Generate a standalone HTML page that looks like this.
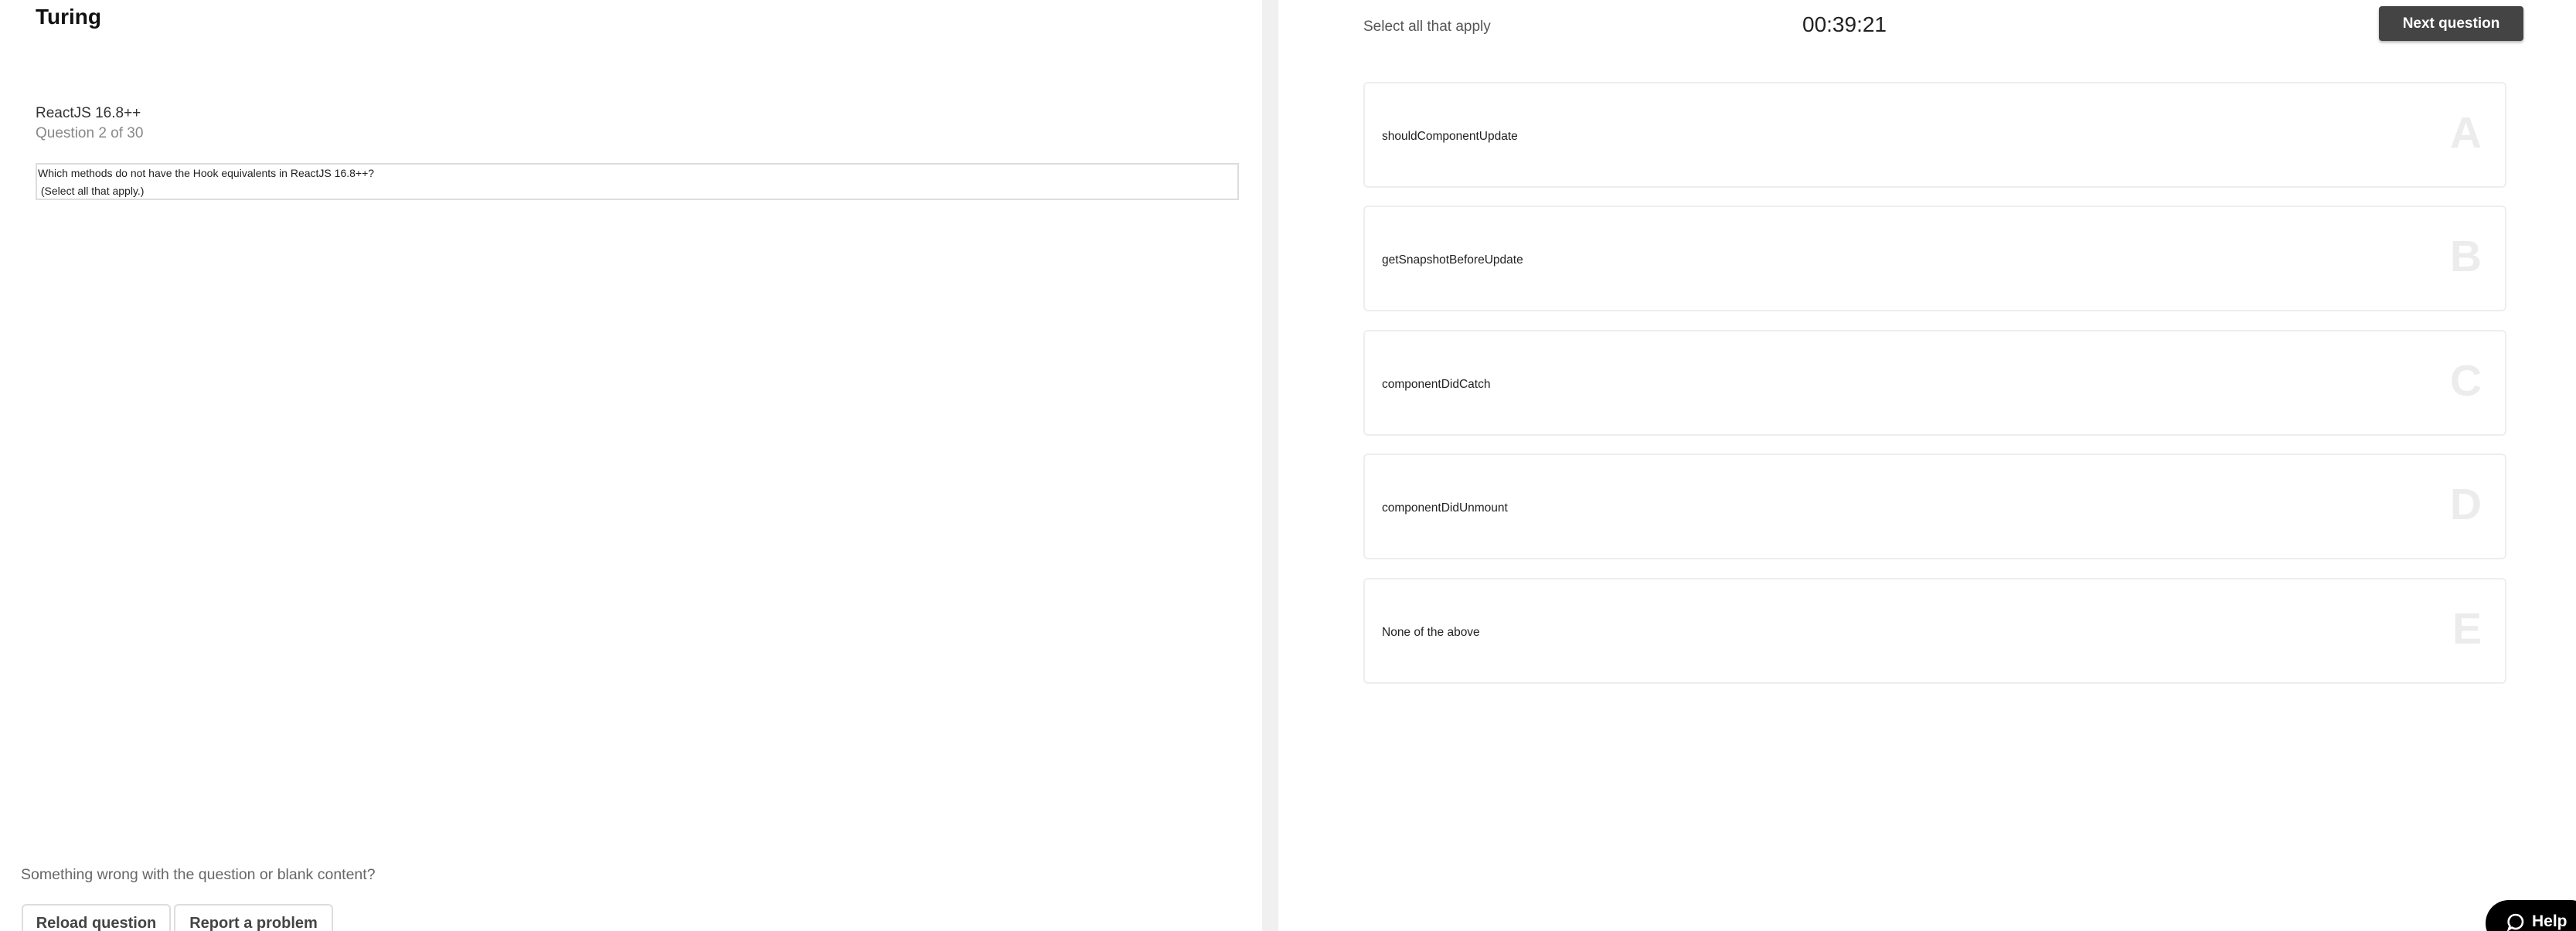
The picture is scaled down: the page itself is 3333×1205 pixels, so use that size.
<!DOCTYPE html>
<html><head><meta charset="utf-8"><style>
*{box-sizing:border-box;margin:0;padding:0}
html,body{width:3333px;height:1205px;overflow:hidden;background:#fff;font-family:"Liberation Sans",sans-serif;position:relative}
.abs{position:absolute}
.card{position:absolute;left:1764px;width:1479px;height:137px;border:2px solid #eeeeee;border-radius:6px;background:#fff}
.card .t{position:absolute;left:22px;top:60px;font-size:15.5px;color:#222}
.card .l{position:absolute;right:30px;top:31px;font-size:57px;font-weight:bold;color:#ececec}
.btn{position:absolute;top:1170px;height:50px;border:2px solid #ddd;border-radius:6px;font-size:20px;font-weight:bold;color:#444;text-align:center;line-height:46px;background:#fff}
</style></head><body>
<div class="abs" style="left:46px;top:6px;font-size:28px;font-weight:bold;color:#111">Turing</div>
<div class="abs" style="left:46px;top:136px;font-size:19px;color:#333">ReactJS 16.8++</div>
<div class="abs" style="left:46px;top:162px;font-size:19px;color:#888">Question 2 of 30</div>
<div class="abs" style="left:46px;top:211px;width:1557px;height:48px;border:2px solid #ddd;font-size:14px;color:#222;line-height:23px;padding-left:1px">Which methods do not have the Hook equivalents in ReactJS 16.8++?<br>&nbsp;(Select all that apply.)</div>
<div class="abs" style="left:27px;top:1121px;font-size:19.5px;color:#666">Something wrong with the question or blank content?</div>
<div class="btn" style="left:28px;width:193px">Reload question</div>
<div class="btn" style="left:225px;width:206px">Report a problem</div>
<div class="abs" style="left:1633px;top:0;width:21px;height:1205px;background:#f0f0f0"></div>
<div class="abs" style="left:1764px;top:24px;font-size:19px;color:#555">Select all that apply</div>
<div class="abs" style="left:2332px;top:16px;font-size:28px;color:#222">00:39:21</div>
<div class="abs" style="left:3078px;top:8px;width:187px;height:45px;background:#444;border-radius:4px;color:#fff;font-size:19px;font-weight:bold;text-align:center;line-height:45px;box-shadow:0 2px 3px rgba(0,0,0,.3)">Next question</div>
<div class="card" style="top:106px"><div class="t">shouldComponentUpdate</div><div class="l">A</div></div>
<div class="card" style="top:266px"><div class="t">getSnapshotBeforeUpdate</div><div class="l">B</div></div>
<div class="card" style="top:427px"><div class="t">componentDidCatch</div><div class="l">C</div></div>
<div class="card" style="top:587px"><div class="t">componentDidUnmount</div><div class="l">D</div></div>
<div class="card" style="top:748px"><div class="t">None of the above</div><div class="l">E</div></div>
<div class="abs" style="left:3216px;top:1165px;width:140px;height:60px;background:#000;border-radius:30px;color:#fff;font-size:21px;font-weight:bold">
<svg class="abs" style="left:26px;top:16px" width="26" height="26" viewBox="0 0 26 26"><path d="M13 3a9 9 0 1 1-5 16.5L4 22l1.5-4.5A9 9 0 0 1 13 3z" fill="none" stroke="#fff" stroke-width="2.6"/></svg>
<span class="abs" style="left:60px;top:16px">Help</span></div>
</body></html>
